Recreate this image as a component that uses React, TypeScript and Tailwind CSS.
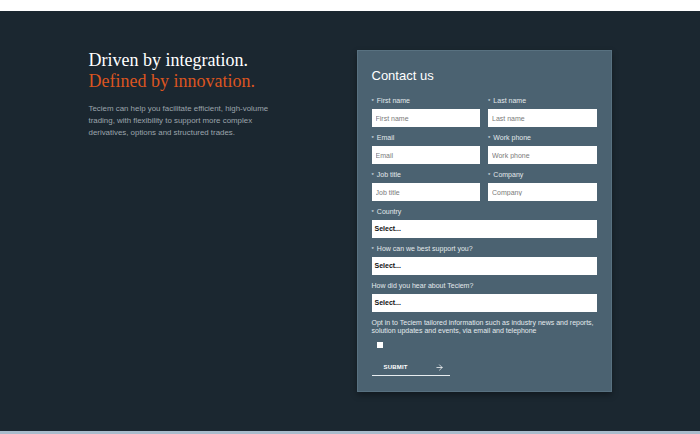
import { ArrowRight } from "lucide-react";

const sans = { fontFamily: '"Liberation Sans", Arial, sans-serif' };

function Field({ label, required = true }: { label: string; required?: boolean }) {
  return (
    <div className="flex flex-col">
      <label className="h-[8px] text-[7px] leading-[8px] text-[#e3e9ec]">
        {required && <span className="mr-[3px] text-[6px]">*</span>}
        {label}
      </label>
      <input
        placeholder={label}
        className="mt-[4px] h-[18px] w-full bg-white px-[4px] text-[7px] text-[#222] outline-none placeholder:text-[#7a7a7a]"
      />
    </div>
  );
}

function SelectField({ label, required = true }: { label: string; required?: boolean }) {
  return (
    <div className="flex flex-col">
      <label className="h-[8px] text-[7px] leading-[8px] text-[#e3e9ec]">
        {required && <span className="mr-[3px] text-[6px]">*</span>}
        {label}
      </label>
      <div className="mt-[4px] flex h-[18px] w-full items-center bg-white px-[3px] text-[7px] font-bold text-[#111]">
        Select...
      </div>
    </div>
  );
}

export default function App() {
  return (
    <div className="min-h-screen bg-white" style={sans}>
      <div className="h-[11px] bg-white" />
      <section className="bg-[#1b2730] py-[39px]">
        <div className="mx-auto flex w-[523px] justify-between">
          {/* Left intro */}
          <div className="w-[210px]">
            <h2
              className="text-[18px] leading-[21px] text-white"
              style={{ fontFamily: '"Liberation Serif", "Times New Roman", serif' }}
            >
              Driven by integration.
              <br />
              <span className="text-[#db5520]">Defined by innovation.</span>
            </h2>
            <p className="mt-[11px] text-[7.9px] leading-[12px] text-[#9ba5ac]">
              Teciem can help you facilitate efficient, high-volume
              <br />
              trading, with flexibility to support more complex
              <br />
              derivatives, options and structured trades.
            </p>
          </div>

          {/* Contact card */}
          <div className="h-[342px] w-[255px] border border-[#587180] bg-[#4b6271] px-[14px] pt-[18px] shadow-[0_3px_6px_rgba(0,0,0,0.35)]">
            <h3 className="h-[14px] text-[13px] leading-[14px] text-white">Contact us</h3>

            <div className="mt-[14px] grid grid-cols-2 gap-x-[8px] gap-y-[7px]">
              <Field label="First name" />
              <Field label="Last name" />
              <Field label="Email" />
              <Field label="Work phone" />
              <Field label="Job title" />
              <Field label="Company" />
            </div>

            <div className="mt-[7px] flex flex-col gap-[7px]">
              <SelectField label="Country" />
              <SelectField label="How can we best support you?" />
              <SelectField label="How did you hear about Teciem?" required={false} />
            </div>

            <p className="mt-[7px] text-[7px] leading-[8px] text-[#e4eaee]">
              Opt in to Teciem tailored information such as industry news and reports,
              <br />
              solution updates and events, via email and telephone
            </p>

            <div className="mt-[7px] ml-[5px] h-[6px] w-[6px] bg-white" />

            <button className="mt-[12px] flex h-[16px] w-[78px] items-center justify-between border-b border-[#e8edf0] pl-[12px] pr-[6px]">
              <span className="text-[6px] font-bold tracking-[0.2px] text-white">SUBMIT</span>
              <ArrowRight size={9} strokeWidth={2} className="text-white" />
            </button>
          </div>
        </div>
      </section>
      <div className="h-[3px] bg-[#a9bccc]" />
    </div>
  );
}
